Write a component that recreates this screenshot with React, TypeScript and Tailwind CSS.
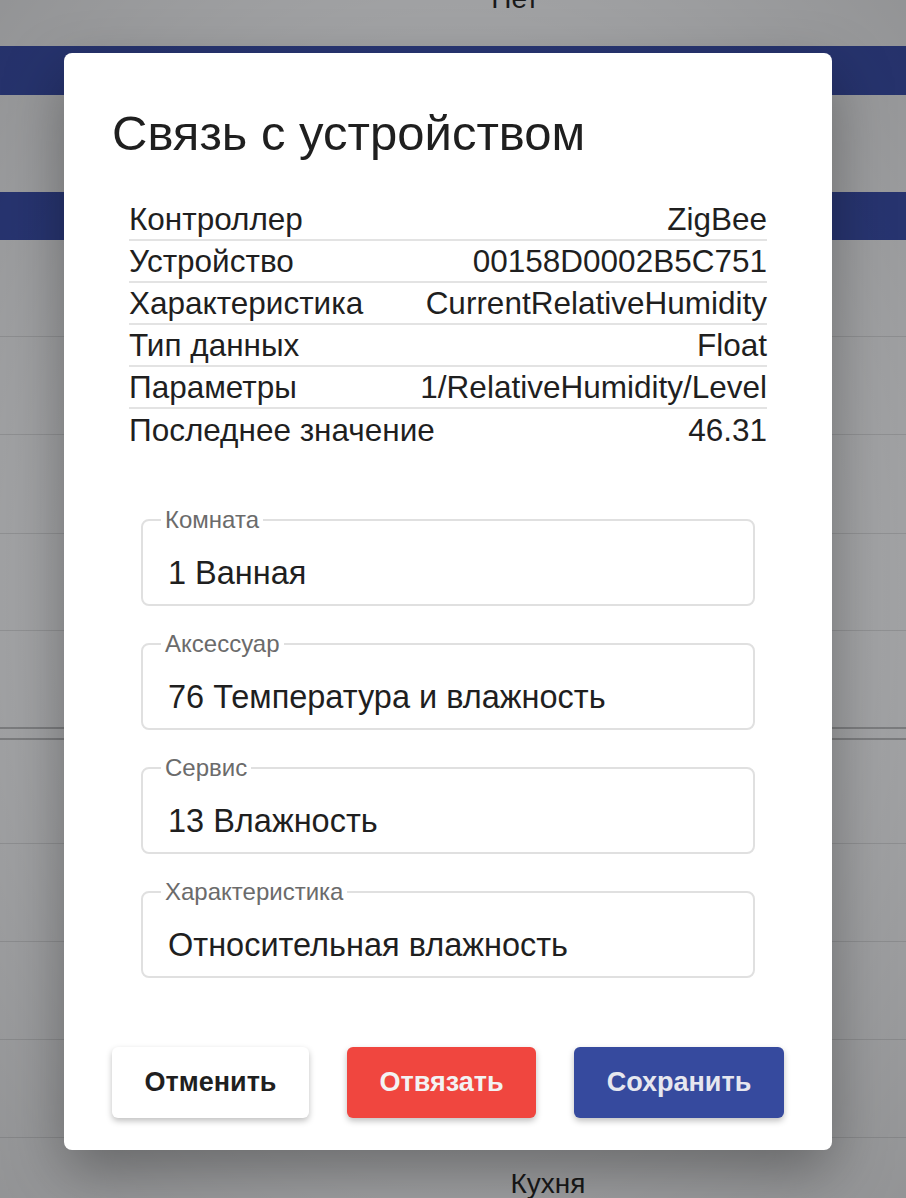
import React from "react";

const info: [string, string][] = [
  ["Контроллер", "ZigBee"],
  ["Устройство", "00158D0002B5C751"],
  ["Характеристика", "CurrentRelativeHumidity"],
  ["Тип данных", "Float"],
  ["Параметры", "1/RelativeHumidity/Level"],
  ["Последнее значение", "46.31"],
];

const fields: [string, string][] = [
  ["Комната", "1 Ванная"],
  ["Аксессуар", "76 Температура и влажность"],
  ["Сервис", "13 Влажность"],
  ["Характеристика", "Относительная влажность"],
];

function Field({ label, value }: { label: string; value: string }) {
  return (
    <fieldset className="h-[97px] rounded-[8px] border-2 border-[#e0e0e0] px-[18px] pb-0 pt-0 m-0">
      <legend className="px-[4px] text-[24px] leading-[22px] text-[#6b6b6b]">{label}</legend>
      <div className="pl-[7px] pt-[24px] text-[32.5px] leading-[36px] text-[#1f1f1f]">{value}</div>
    </fieldset>
  );
}

export default function App() {
  return (
    <div
      className="relative w-[906px] h-[1198px] overflow-hidden bg-[#a7a8aa]"
      style={{ fontFamily: "'Liberation Sans', Arial, sans-serif" }}
    >
      {/* dimmed page behind the dialog */}
      <div className="flex flex-col">
        <div className="h-[46px] flex justify-center pl-[124px]">
          <span className="-mt-[15px] text-[28px] leading-[28px] text-[#1a1a1a]">Нет</span>
        </div>
        <div className="h-[49px] bg-[#2a3878]" />
        <div className="h-[97px]" />
        <div className="h-[48px] bg-[#2a3878]" />
        <div className="h-[97px] border-b border-[#959698]" />
        <div className="h-[98px] border-b border-[#959698]" />
        <div className="h-[99px] border-b border-[#959698]" />
        <div className="h-[97px] border-b border-[#959698]" />
        <div className="h-[98px] border-b-2 border-[#808183]" />
        <div className="h-[11px] border-b-2 border-[#808183]" />
        <div className="h-[104px] border-b border-[#959698]" />
        <div className="h-[98px] border-b border-[#959698]" />
        <div className="h-[98px] border-b border-[#959698]" />
        <div className="h-[98px] border-b border-[#959698]" />
        <div className="flex justify-center pl-[190px] pt-[32px]">
          <span className="text-[28px] leading-[28px] text-[#1a1a1a]">Кухня</span>
        </div>
      </div>
      <div className="pointer-events-none absolute inset-0 bg-[radial-gradient(ellipse_at_center,rgba(0,0,0,0)_55%,rgba(0,0,0,0.12)_100%)]" />

      {/* dialog */}
      <div className="absolute left-[64px] top-[53px] w-[768px] h-[1097px] rounded-[8px] bg-white shadow-[0_22px_60px_rgba(0,0,0,0.35)] flex flex-col">
        <h2 className="pl-[48px] pt-[52px] text-[49px] leading-[56px] font-normal text-[#1f1f1f]">
          Связь с устройством
        </h2>

        <div className="mx-[65px] mt-[38px] flex flex-col">
          {info.map(([k, v], i) => (
            <div
              key={k}
              className={`h-[42px] flex items-center justify-between text-[31.5px] leading-[34px] text-[#1f1f1f] ${
                i < info.length - 1 ? "border-b-2 border-[#e3e3e3]" : ""
              }`}
            >
              <span>{k}</span>
              <span>{v}</span>
            </div>
          ))}
        </div>

        <div className="mx-[77px] mt-[58px] flex flex-col gap-[27px]">
          {fields.map(([l, v]) => (
            <Field key={l} label={l} value={v} />
          ))}
        </div>

        <div className="mt-auto mb-[32px] px-[48px] flex justify-between">
          <button className="w-[197px] h-[71px] rounded-[6px] bg-white shadow-[0_3px_6px_rgba(0,0,0,0.25)] text-[27px] font-bold text-[#1f1f1f]">
            Отменить
          </button>
          <button className="w-[189px] h-[71px] rounded-[6px] bg-[#f0463f] shadow-[0_3px_6px_rgba(0,0,0,0.25)] text-[27px] font-bold text-[#f3f3f3]">
            Отвязать
          </button>
          <button className="w-[210px] h-[71px] rounded-[6px] bg-[#364a9e] shadow-[0_3px_6px_rgba(0,0,0,0.25)] text-[27px] font-bold text-[#e6e7ef]">
            Сохранить
          </button>
        </div>
      </div>
    </div>
  );
}
